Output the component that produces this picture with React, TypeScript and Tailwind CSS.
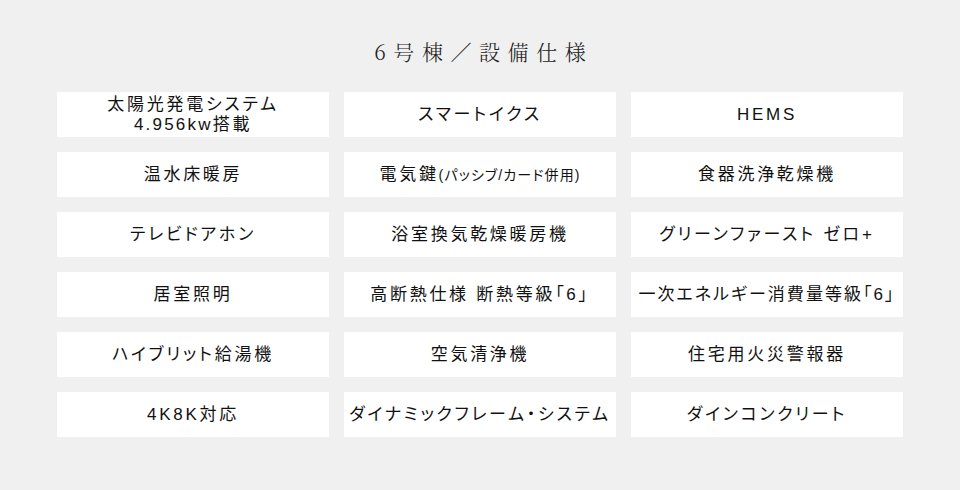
import React from "react";

const items: React.ReactNode[] = [
  <>太陽光発電システム<br /><span className="tracking-[0.13em]">4.956kw</span>搭載</>,
  "スマートイクス",
  "HEMS",
  "温水床暖房",
  <>電気鍵<span className="text-[14px] tracking-[0.08em]">(パッシブ/カード併用)</span></>,
  "食器洗浄乾燥機",
  "テレビドアホン",
  "浴室換気乾燥暖房機",
  "グリーンファースト ゼロ+",
  "居室照明",
  "高断熱仕様 断熱等級「6」",
  <span className="tracking-[0.12em]">一次エネルギー消費量等級「6」</span>,
  "ハイブリット給湯機",
  "空気清浄機",
  "住宅用火災警報器",
  "4K8K対応",
  "ダイナミックフレーム・システム",
  "ダインコンクリート",
];

export default function App() {
  return (
    <div
      className="w-[960px] h-[490px] bg-[#f0f0f0] flex flex-col items-center"
      style={{ fontFamily: '"Liberation Sans", "Noto Sans CJK JP", sans-serif' }}
    >
      <h1
        className="mt-[37px] h-[28px] flex items-center text-[21px] leading-none tracking-[0.36em] text-[#222] font-light pl-[0.36em]"
        style={{ fontFamily: '"Noto Serif CJK JP", "Liberation Serif", "Noto Sans CJK JP", serif' }}
      >
        6号棟／設備仕様
      </h1>
      <div className="mt-[27px] grid grid-cols-3 gap-x-[15px] gap-y-[15px] w-[846px]">
        {items.map((it, i) => (
          <div
            key={i}
            className="h-[45px] bg-white flex items-center justify-center text-center text-[17px] leading-[20px] tracking-[0.16em] font-normal text-[#111] [font-feature-settings:'palt']"
          >
            <div>{it}</div>
          </div>
        ))}
      </div>
    </div>
  );
}
